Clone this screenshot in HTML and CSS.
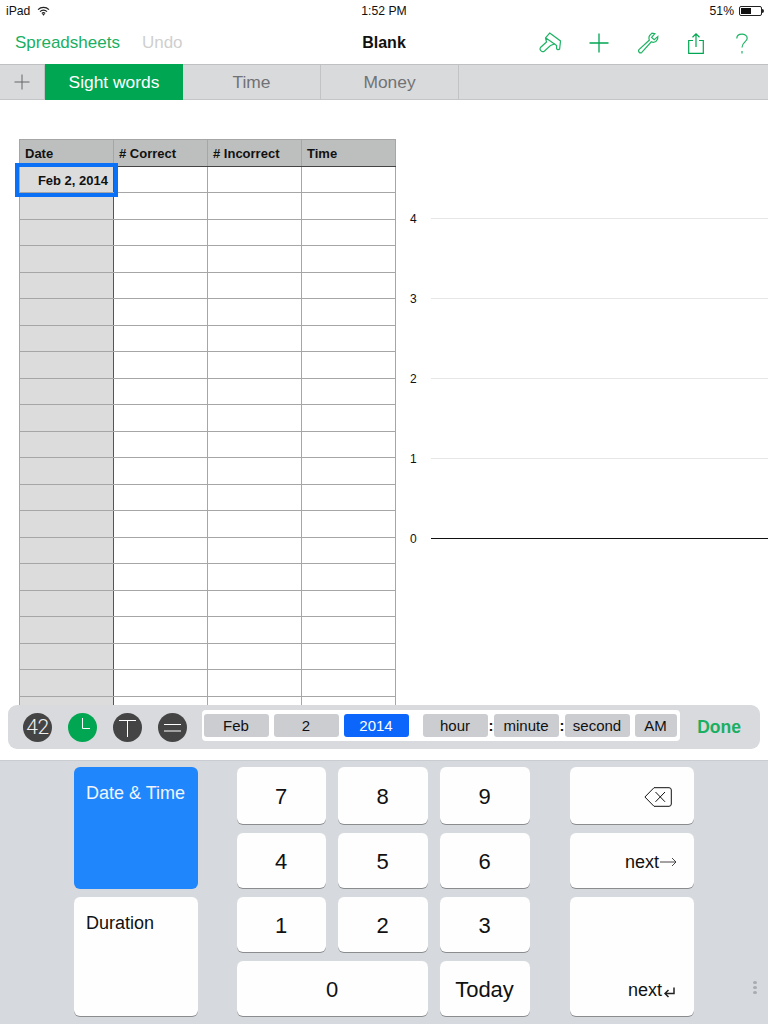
FILE: index.html
```html
<!DOCTYPE html>
<html lang="en">
<head>
    <meta charset="UTF-8">
    <title>Blank</title>
    <link rel="stylesheet" href="styles.css">
</head>
<body>
    <!-- Status bar -->
    <div class="status-bar">
        <div class="status-left">
            <span>iPad</span>
            <svg class="wifi" width="13" height="10" viewBox="0 0 14 11"><path d="M1 4 A8.5 8.5 0 0 1 13 4 M3.2 6.2 A5.4 5.4 0 0 1 10.8 6.2 M5.2 8.2 A2.6 2.6 0 0 1 8.8 8.2" fill="none" stroke="#222" stroke-width="1.4"/><path d="M7 10.8 L5.6 9.2 A2 2 0 0 1 8.4 9.2 Z" fill="#222"/></svg>
        </div>
        <div class="status-time">1:52 PM</div>
        <div class="status-right">
            <span>51%</span>
            <div class="battery"><div class="battery-level"></div></div>
        </div>
    </div>

    <!-- Toolbar -->
    <div class="toolbar">
        <div class="toolbar-left">
            <span class="toolbar-link">Spreadsheets</span>
            <span class="toolbar-link disabled">Undo</span>
        </div>
        <div class="toolbar-title">Blank</div>
        <div class="toolbar-icons">
            <svg width="22" height="22" viewBox="0 0 22 22"><path d="M10.7 1 L21.5 9 L20.7 16.5 A1.6 1.6 0 0 1 17.6 16.5 V13.5 L15.5 12 L11.5 13.5 L5.5 19 A2.7 2.7 0 0 1 1.5 15.5 L7.5 10 L6.5 5.8 Z M6.5 5.8 L15.5 12" fill="none" stroke="#1db364" stroke-width="1.2"/></svg>
            <svg width="20" height="20" viewBox="0 0 20 20"><path d="M10 0.5 V19.5 M0.5 10 H19.5" fill="none" stroke="#00a651" stroke-width="1.3"/></svg>
            <svg width="22" height="22" viewBox="0 0 22 22"><path d="M15 1.2 L12.6 3.6 A4.8 4.8 0 0 0 12.4 8 L2 17.6 A2 2 0 0 0 4.8 20.4 L14.3 9.8 A4.8 4.8 0 0 0 18.8 9.6 L20.6 7 L20.8 4.6 L17.2 7.6 L14.6 5.4 L17.8 1.6 Z" fill="none" stroke="#1db364" stroke-width="1.2"/></svg>
            <svg class="icon-share" width="16" height="21" viewBox="0 0 16 21"><path d="M5 7.5 H0.7 V20.3 H15.3 V7.5 H11 M8 14 V1 M4.5 4.3 L8 0.9 L11.5 4.3" fill="none" stroke="#00a651" stroke-width="1.2"/></svg>
            <svg class="icon-help" width="12" height="21" viewBox="0 0 12 21"><path d="M0.8 5.5 C0.8 -0.2 11.2 -0.2 11.2 5.2 C11.2 9 6 9 6 14.5 M6 18 V20.5" fill="none" stroke="#1db364" stroke-width="1.2"/></svg>
        </div>
    </div>

    <!-- Tabs -->
    <div class="tabs">
        <div class="tab-add"><svg width="16" height="16" viewBox="0 0 16 16"><path d="M8 0.5 V15.5 M0.5 8 H15.5" stroke="#666" stroke-width="1"/></svg></div>
        <div class="tab active">Sight words</div>
        <div class="tab">Time</div>
        <div class="tab">Money</div>
    </div>

    <!-- Canvas -->
    <div class="canvas">
        <div class="sheet">
            <table>
                <tr class="head"><th>Date</th><th># Correct</th><th># Incorrect</th><th>Time</th></tr>
                <tr><td class="date">Feb 2, 2014</td><td></td><td></td><td></td></tr>
                <tr><td class="date"></td><td></td><td></td><td></td></tr>
                <tr><td class="date"></td><td></td><td></td><td></td></tr>
                <tr><td class="date"></td><td></td><td></td><td></td></tr>
                <tr><td class="date"></td><td></td><td></td><td></td></tr>
                <tr><td class="date"></td><td></td><td></td><td></td></tr>
                <tr><td class="date"></td><td></td><td></td><td></td></tr>
                <tr><td class="date"></td><td></td><td></td><td></td></tr>
                <tr><td class="date"></td><td></td><td></td><td></td></tr>
                <tr><td class="date"></td><td></td><td></td><td></td></tr>
                <tr><td class="date"></td><td></td><td></td><td></td></tr>
                <tr><td class="date"></td><td></td><td></td><td></td></tr>
                <tr><td class="date"></td><td></td><td></td><td></td></tr>
                <tr><td class="date"></td><td></td><td></td><td></td></tr>
                <tr><td class="date"></td><td></td><td></td><td></td></tr>
                <tr><td class="date"></td><td></td><td></td><td></td></tr>
                <tr><td class="date"></td><td></td><td></td><td></td></tr>
                <tr><td class="date"></td><td></td><td></td><td></td></tr>
                <tr><td class="date"></td><td></td><td></td><td></td></tr>
                <tr><td class="date"></td><td></td><td></td><td></td></tr>
                <tr><td class="date"></td><td></td><td></td><td></td></tr>
            </table>
            <div class="selected-cell"></div>
        </div>

        <div class="chart">
            <div class="chart-row"><span>4</span><div class="chart-line"></div></div>
            <div class="chart-row"><span>3</span><div class="chart-line"></div></div>
            <div class="chart-row"><span>2</span><div class="chart-line"></div></div>
            <div class="chart-row"><span>1</span><div class="chart-line"></div></div>
            <div class="chart-row"><span>0</span><div class="chart-line axis"></div></div>
        </div>
    </div>

    <!-- Formula bar -->
    <div class="formula-wrap">
        <div class="formula-bar">
            <div class="mode-icons">
                <div class="mode-icon">42</div>
                <div class="mode-icon green"><svg width="29" height="29" viewBox="0 0 29 29"><path d="M14.5 5 V15.5 H22" fill="none" stroke="#fff" stroke-width="1"/></svg></div>
                <div class="mode-icon"><svg width="29" height="29" viewBox="0 0 29 29"><path d="M6 7.5 H23 M14.5 7.5 V24" fill="none" stroke="#fff" stroke-width="1"/></svg></div>
                <div class="mode-icon"><svg width="29" height="29" viewBox="0 0 29 29"><path d="M6 11.5 H23 M6 18 H23" fill="none" stroke="#fff" stroke-width="1"/></svg></div>
            </div>
            <div class="field">
                <span class="token">Feb</span>
                <span class="token">2</span>
                <span class="token selected">2014</span>
                <span class="token hour">hour</span>
                <span class="colon">:</span>
                <span class="token">minute</span>
                <span class="colon">:</span>
                <span class="token">second</span>
                <span class="token ampm">AM</span>
            </div>
            <div class="done">Done</div>
        </div>
    </div>

    <!-- Keyboard -->
    <div class="keyboard">
        <div class="mode-keys">
            <div class="key label-key blue">Date &amp; Time</div>
            <div class="key label-key">Duration</div>
        </div>
        <div class="num-keys">
            <div class="key">7</div>
            <div class="key">8</div>
            <div class="key">9</div>
            <div class="key">4</div>
            <div class="key">5</div>
            <div class="key">6</div>
            <div class="key">1</div>
            <div class="key">2</div>
            <div class="key">3</div>
            <div class="key zero">0</div>
            <div class="key">Today</div>
        </div>
        <div class="action-keys">
            <div class="key right-key">
                <svg class="backspace" width="28" height="20" viewBox="0 0 28 20"><path d="M10 0.7 H25 A2.3 2.3 0 0 1 27.3 3 V17 A2.3 2.3 0 0 1 25 19.3 H10 L0.9 10 Z" fill="none" stroke="#111" stroke-width="1"/><path d="M11.5 5 L21 14.8 M21 5 L11.5 14.8" stroke="#111" stroke-width="1"/></svg>
            </div>
            <div class="key right-key small-text">next<svg width="17" height="10" viewBox="0 0 17 10"><path d="M0 5 H16 M12 1 L16 5 L12 9" fill="none" stroke="#333" stroke-width="0.9"/></svg></div>
            <div class="key right-key small-text bottom">next<svg width="12" height="11" viewBox="0 0 12 11"><path d="M11 0.5 V6.5 H2 M5.5 3 L2 6.5 L5.5 10" fill="none" stroke="#222" stroke-width="1.5"/></svg></div>
        </div>
        <div class="grip"><i></i><i></i><i></i></div>
    </div>
</body>
</html>
```

FILE: styles.css
```css
* {
    box-sizing: border-box;
}
body {
    margin: 0;
    width: 768px;
    height: 1024px;
    overflow: hidden;
    background-color: #fff;
    font-family: "Liberation Sans", Arial, sans-serif;
    color: #111;
}

/* Status bar */
.status-bar {
    height: 22px;
    display: flex;
    align-items: center;
    justify-content: space-between;
    padding: 0 6px 1px;
    font-size: 12.2px;
}
.status-left, .status-right {
    width: 200px;
    display: flex;
    align-items: center;
}
.status-left {
    gap: 7px;
}
.status-right {
    justify-content: flex-end;
    gap: 5px;
}
.battery {
    width: 23px;
    height: 10px;
    border: 1px solid #222;
    border-radius: 2px;
    padding: 1px;
    position: relative;
}
.battery:after {
    content: "";
    position: absolute;
    right: -3px;
    top: 2px;
    width: 2px;
    height: 4px;
    background-color: #222;
    border-radius: 0 2px 2px 0;
}
.battery-level {
    width: 51%;
    height: 100%;
    background-color: #111;
}

/* Toolbar */
.toolbar {
    height: 42px;
    display: flex;
    align-items: center;
    justify-content: space-between;
    padding: 0 20px 0 15px;
    position: relative;
}
.toolbar-left {
    display: flex;
    gap: 22px;
    font-size: 17px;
}
.toolbar-link {
    color: #1aaf62;
}
.toolbar-link.disabled {
    color: #cfcfcf;
}
.toolbar-title {
    position: absolute;
    left: 0;
    right: 0;
    text-align: center;
    font-size: 16px;
    font-weight: bold;
    pointer-events: none;
}
.toolbar-icons {
    display: flex;
    align-items: center;
    gap: 28px;
}
.icon-share {
    margin-left: 1px;
}
.icon-help {
    margin-left: 4px;
}

/* Tabs */
.tabs {
    height: 36px;
    display: flex;
    background-color: #d9dadc;
    border-top: 1px solid #bfc0c1;
    border-bottom: 1px solid #c4c5c6;
}
.tab-add {
    width: 45px;
    display: flex;
    align-items: center;
    justify-content: center;
    border-right: 1px solid #bfc0c1;
}
.tab {
    width: 138px;
    display: flex;
    align-items: center;
    justify-content: center;
    padding-top: 1px;
    font-size: 17.4px;
    color: #717275;
    border-right: 1px solid #c2c3c5;
}
.tab.active {
    background-color: #00a651;
    color: #fff;
    border-right: none;
    margin-top: -1px;
    margin-bottom: -1px;
}

/* Canvas */
.canvas {
    height: 605px;
    overflow: hidden;
    display: flex;
    padding: 39px 0 0 19px;
}
.sheet {
    position: relative;
    width: 377px;
    flex: none;
}
.sheet table {
    border-collapse: collapse;
    table-layout: fixed;
    width: 377px;
}
.sheet th, .sheet td {
    border: 1px solid #a6a6a6;
    padding: 2px 5px 0;
    font-size: 13px;
    height: 26.5px;
}
.sheet th {
    background-color: #bdbfbe;
    text-align: left;
    vertical-align: bottom;
    padding: 0 5px 5px;
    border-bottom: 1px solid #444;
}
.sheet td.date {
    background-color: #dcdcdc;
    text-align: right;
    font-weight: bold;
    border-right: 1px solid #555;
}
.selected-cell {
    position: absolute;
    left: -4px;
    top: 24px;
    width: 103px;
    height: 34px;
    border: 4px solid #0a70f5;
}
.chart {
    flex: 1;
    margin-left: 14px;
    padding-top: 39px;
}
.chart-row {
    height: 80px;
    display: flex;
    align-items: center;
    font-size: 12px;
    gap: 17px;
}
.chart-row span {
    width: 4px;
    padding-top: 1px;
}
.chart-line {
    flex: 1;
    height: 1px;
    background-color: #e6e6e6;
}
.chart-line.axis {
    background-color: #111;
}

/* Formula bar */
.formula-wrap {
    height: 55px;
    padding: 0 8px;
}
.formula-bar {
    height: 44px;
    display: flex;
    align-items: center;
    background-color: #d8dadd;
    border-radius: 9px;
    padding: 0 0 0 15px;
}
.mode-icons {
    display: flex;
    width: 179px;
    flex: none;
    justify-content: space-between;
    padding-right: 15px;
}
.mode-icon {
    width: 29px;
    height: 29px;
    border-radius: 50%;
    background-color: #444;
    color: #eee;
    font-family: Roboto, "Liberation Sans", sans-serif;
    font-weight: 300;
    font-size: 21px;
    letter-spacing: -0.5px;
    display: flex;
    align-items: center;
    justify-content: center;
}
.mode-icon.green {
    background-color: #00a651;
}
.field {
    width: 478px;
    height: 31px;
    margin-top: -3px;
    flex: none;
    display: flex;
    align-items: center;
    gap: 5px;
    background-color: #fff;
    border-radius: 4px;
    padding: 0 3px 0 2px;
}
.token {
    flex: none;
    width: 65px;
    height: 23px;
    padding-right: 1px;
    background-color: #cbcdd1;
    border-radius: 3px;
    font-size: 15px;
    display: flex;
    align-items: center;
    justify-content: center;
}
.token.selected {
    background-color: #0c66fc;
    color: #fff;
}
.token.hour {
    margin-left: 9px;
}
.token.ampm {
    width: 42px;
}
.colon {
    flex: none;
    width: 6px;
    margin: 0 -5px;
    text-align: center;
    font-size: 15px;
    font-weight: bold;
}
.done {
    flex: 1;
    text-align: center;
    padding-right: 2px;
    color: #1aaf62;
    font-size: 17.5px;
    font-weight: bold;
}

/* Keyboard */
.keyboard {
    height: 264px;
    background-color: #d6d9dd;
    border-top: 1px solid #c9ccd0;
    display: flex;
    gap: 39px;
    padding: 6px 0 0 74px;
    position: relative;
}
.key {
    background-color: #fefefe;
    border-radius: 6px;
    box-shadow: 0 1px 0 #8b8c8e;
    display: flex;
    align-items: center;
    justify-content: center;
    padding: 3px 1px 0 0;
    font-size: 22px;
}
.mode-keys {
    display: grid;
    grid-template-columns: 124px;
    grid-template-rows: 122px 119px;
    row-gap: 8px;
}
.label-key {
    align-items: flex-start;
    justify-content: flex-start;
    padding: 16px 12px;
    font-size: 18px;
}
.label-key.blue {
    background-color: #2086fb;
    color: #eef5ff;
    box-shadow: none;
}
.num-keys {
    display: grid;
    grid-template-columns: 89px 90px 90px;
    grid-template-rows: 57px 55px 55px 55px;
    gap: 9px 12px;
}
.key.zero {
    grid-column: span 2;
}
.action-keys {
    margin-left: 1px;
    display: grid;
    grid-template-columns: 124px;
    grid-template-rows: 57px 55px 119px;
    row-gap: 9px;
}
.right-key {
    justify-content: flex-end;
    padding-right: 22px;
}
.right-key.small-text {
    font-size: 18px;
    padding-right: 17px;
    gap: 1px;
}
.right-key.small-text.bottom {
    align-items: flex-end;
    padding: 0 19px 15px 0;
}
.small-text.bottom svg {
    margin-bottom: 3px;
}
.grip {
    position: absolute;
    left: 753px;
    top: 220px;
    display: flex;
    flex-direction: column;
    gap: 2px;
}
.grip i {
    width: 4px;
    height: 3px;
    border-radius: 50%;
    background-color: #a9abae;
}
```
